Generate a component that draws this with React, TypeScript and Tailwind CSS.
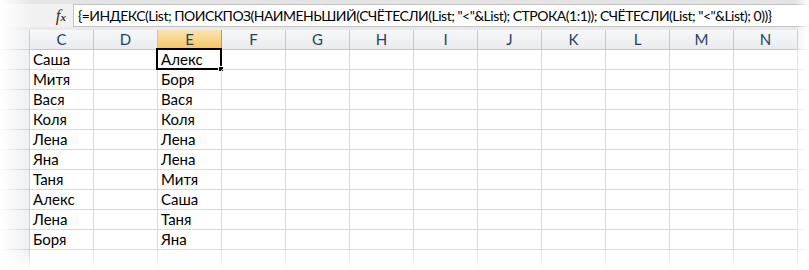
import React from 'react';

const cols = ['C', 'D', 'E', 'F', 'G', 'H', 'I', 'J', 'K', 'L', 'M', 'N'];
const colC = ['Саша', 'Митя', 'Вася', 'Коля', 'Лена', 'Яна', 'Таня', 'Алекс', 'Лена', 'Боря', ''];
const colE = ['Алекс', 'Боря', 'Вася', 'Коля', 'Лена', 'Лена', 'Митя', 'Саша', 'Таня', 'Яна', ''];

const formula =
  '{=ИНДЕКС(List; ПОИСКПОЗ(НАИМЕНЬШИЙ(СЧЁТЕСЛИ(List; "<"&List); СТРОКА(1:1)); СЧЁТЕСЛИ(List; "<"&List); 0))}';

export default function App() {
  return (
    <div
      className="relative w-[809px] h-[270px] overflow-hidden bg-white text-black"
      style={{ fontFamily: 'Lato, "Open Sans", sans-serif' }}
    >
      {/* formula bar */}
      <div className="flex h-[27px] bg-[#e4e4e4] pt-[4px]">
        <div className="w-[73px] shrink-0 flex items-center justify-end pr-[7px] bg-[#f1f1f1]">
          <span className="font-['Liberation_Serif'] italic text-[17px] text-[#333] leading-none">
            f<span className="text-[11px] font-bold">x</span>
          </span>
        </div>
        <div className="flex-1 min-w-0 overflow-hidden bg-white border border-[#c3c3c3] border-r-0 flex items-center pl-[4px] text-[14px] tracking-[-0.5px] whitespace-nowrap">
          {formula}
        </div>
      </div>
      <div className="h-[3px] bg-[#e9e9e9]" />

      {/* grid */}
      <div className="grid grid-cols-[30px_repeat(12,64px)_11px]">
        <div className="h-[20px] bg-[#eceef1] border-r border-b border-[#c5c5c5]" />
        {cols.map((c) => (
          <div
            key={c}
            className={
              c === 'E'
                ? 'h-[20px] flex items-center justify-center text-[15px] text-[#27415f] bg-linear-to-b from-[#fbe4b0] to-[#f3c564] border-r border-b border-[#c29b4c]'
                : 'h-[20px] flex items-center justify-center text-[15px] text-[#27415f] bg-linear-to-b from-[#f7f8f9] to-[#e9ebee] border-r border-b border-[#c5c5c5]'
            }
          >
            {c}
          </div>
        ))}
        <div className="h-[20px] bg-[#f3f3f3] border-b border-[#d5d5d5]" />

        {colC.map((name, r) => (
          <React.Fragment key={r}>
            <div className="h-[20px] bg-[#eceef1] border-r border-b border-[#c5c5c5]" />
            {cols.map((c) => (
              <div
                key={c}
                className="relative h-[20px] border-r border-b border-[#d9d9d9] flex items-end pl-[3px] pb-[2px] text-[15px] leading-none whitespace-nowrap"
              >
                {c === 'C' ? name : c === 'E' ? colE[r] : ''}
                {c === 'E' && r === 0 && (
                  <div className="absolute left-[-2px] top-[-2px] w-[66px] h-[22px] border-2 border-black">
                    <div className="absolute right-[-4px] bottom-[-4px] w-[6px] h-[6px] bg-black border border-white" />
                  </div>
                )}
              </div>
            ))}
            <div className="h-[20px] border-b border-[#e5e5e5]" />
          </React.Fragment>
        ))}
      </div>

      {/* torn edge fades */}
      <div className="pointer-events-none absolute left-0 top-0 h-full w-[34px] bg-linear-to-r from-white to-transparent" />
      <div className="pointer-events-none absolute right-0 top-0 h-full w-[14px] bg-linear-to-l from-white to-transparent" />
      <div className="pointer-events-none absolute left-0 bottom-0 w-full h-[22px] bg-linear-to-t from-white to-transparent" />
    </div>
  );
}
